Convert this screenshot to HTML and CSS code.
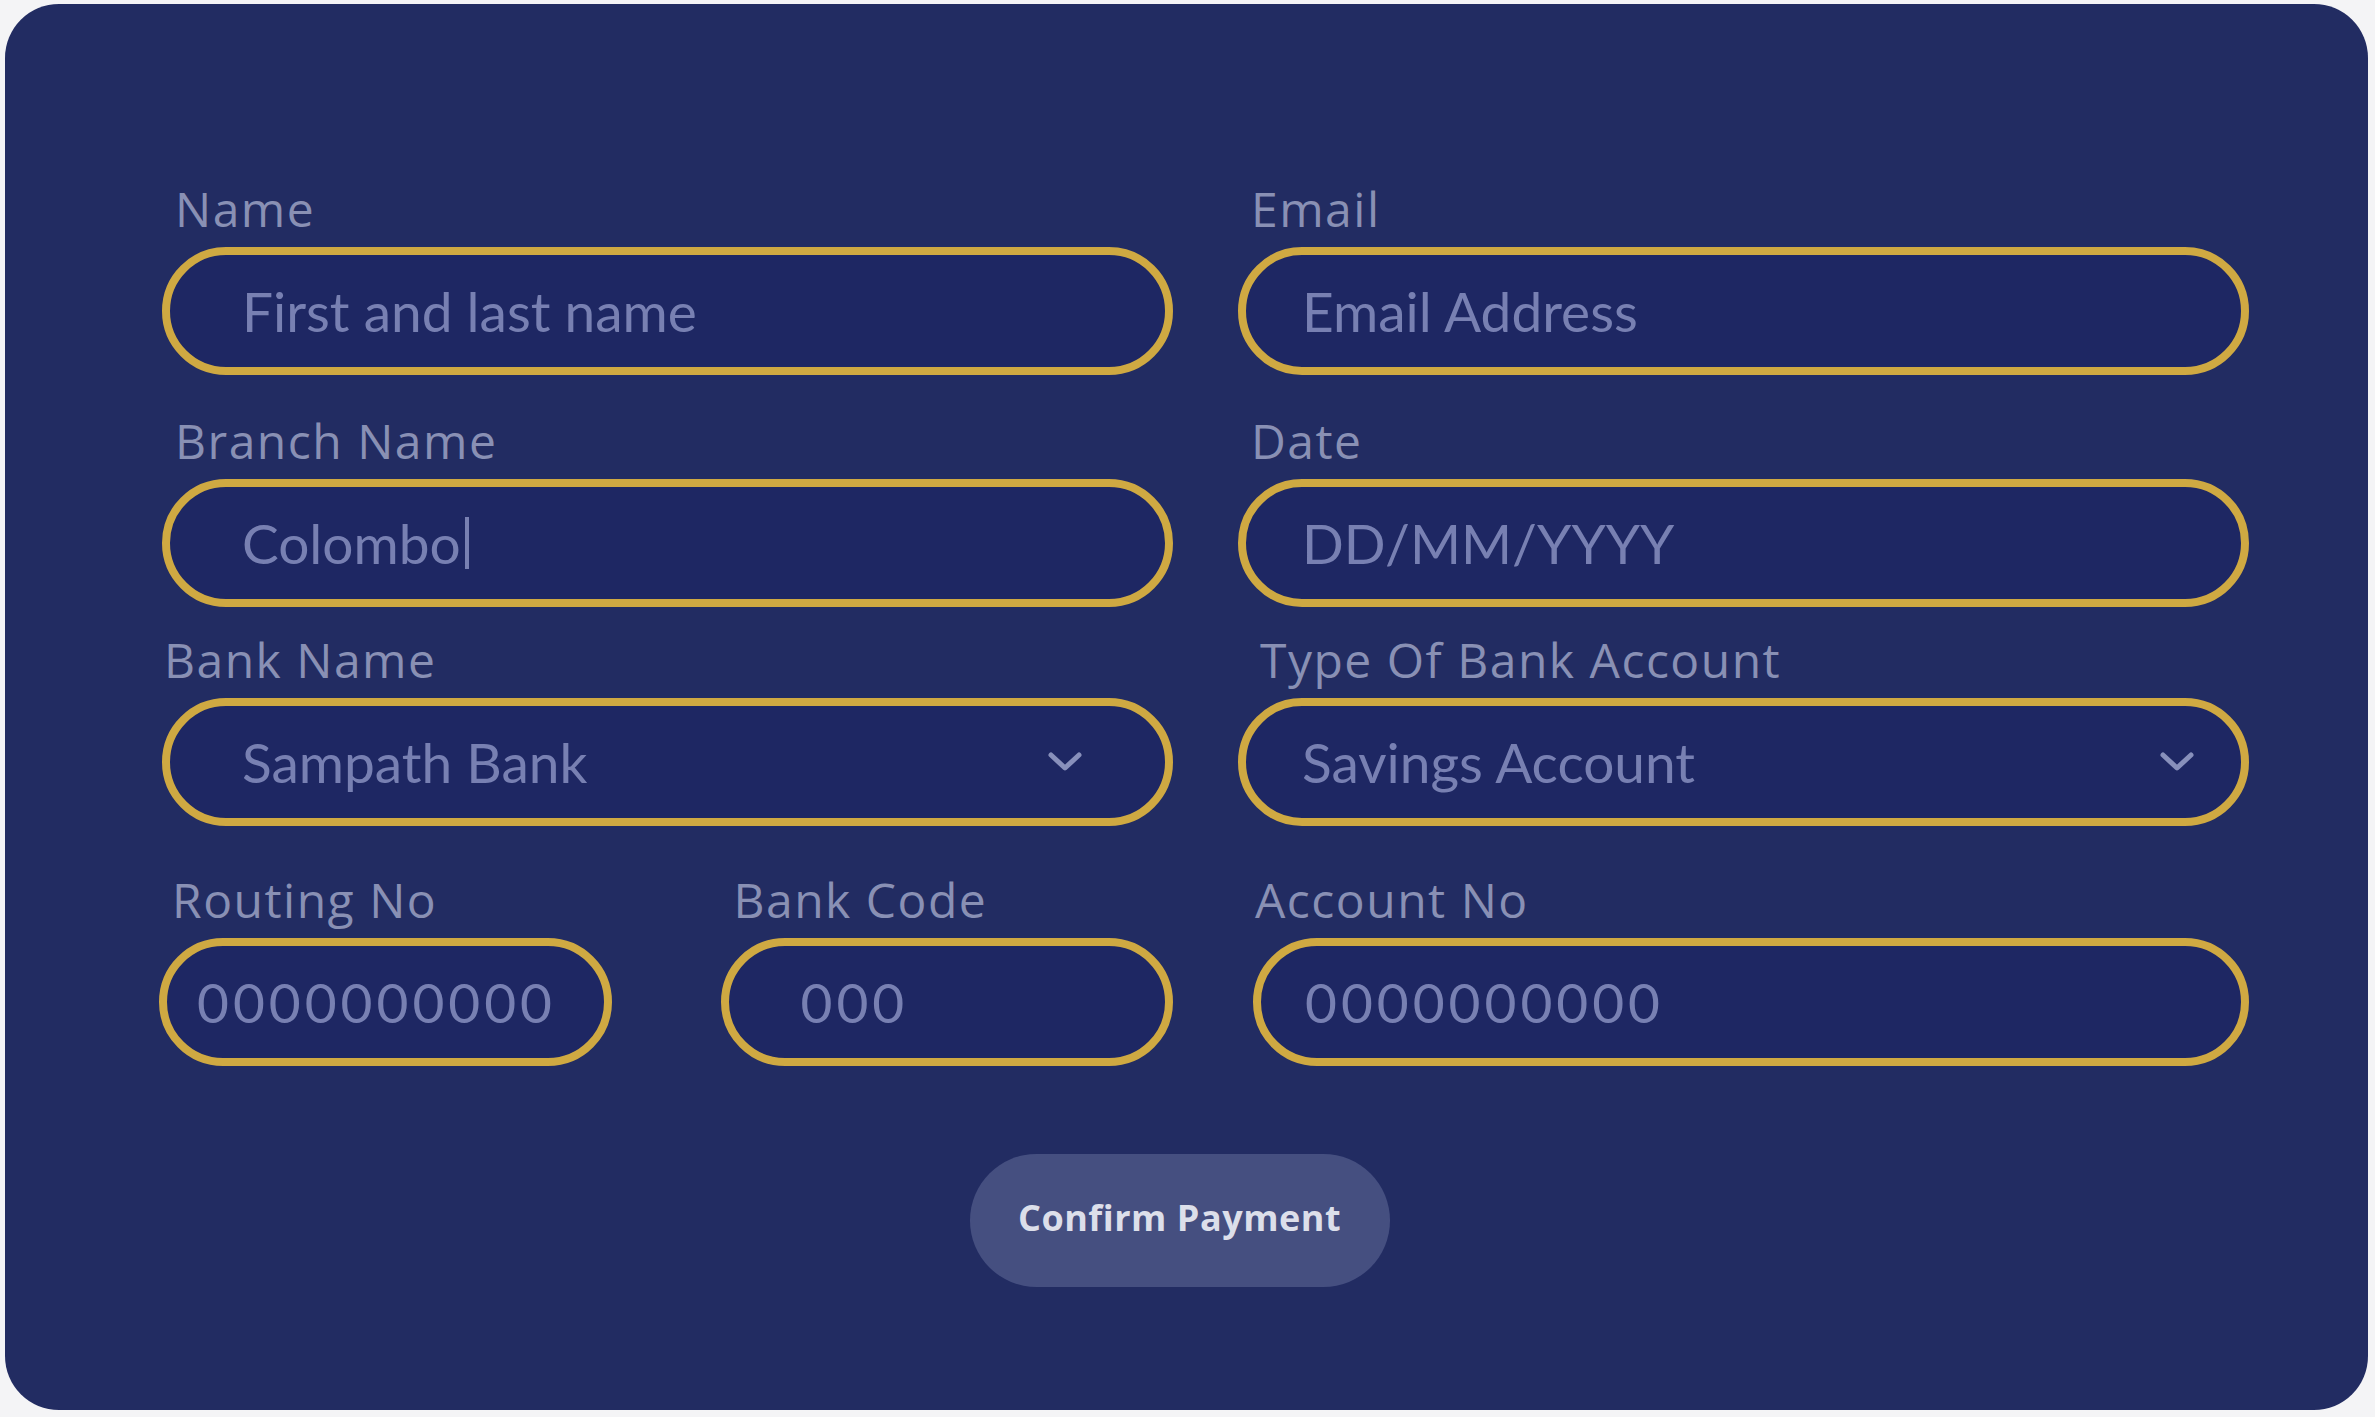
FILE: index.html
```html
<!DOCTYPE html>
<html lang="en">
<head>
<meta charset="utf-8">
<title>Payment Details</title>
<link rel="stylesheet" href="styles.css">
</head>
<body>
<main class="card">
  <form class="form">
    <div class="grid">
      <div class="field">
        <label class="label">Name</label>
        <div class="input input-left"><span class="ph">First and last name</span></div>
      </div>
      <div class="field">
        <label class="label">Email</label>
        <div class="input"><span class="ph">Email Address</span></div>
      </div>
      <div class="field">
        <label class="label">Branch Name</label>
        <div class="input input-left"><span class="ph">Colombo</span><span class="caret"></span></div>
      </div>
      <div class="field">
        <label class="label">Date</label>
        <div class="input"><span class="ph">DD/MM/YYYY</span></div>
      </div>
      <div class="field row3">
        <label class="label label-flush">Bank Name</label>
        <div class="input input-left select select-bank"><span class="ph">Sampath Bank</span>
          <svg class="chev" viewBox="0 0 36 22" width="36" height="22"><path d="M4 4 L18 17 L32 4" fill="none" stroke="currentColor" stroke-width="5" stroke-linecap="round" stroke-linejoin="round"/></svg>
        </div>
      </div>
      <div class="field row3">
        <label class="label label-wide">Type Of Bank Account</label>
        <div class="input select"><span class="ph">Savings Account</span>
          <svg class="chev" viewBox="0 0 36 22" width="36" height="22"><path d="M4 4 L18 17 L32 4" fill="none" stroke="currentColor" stroke-width="5" stroke-linecap="round" stroke-linejoin="round"/></svg>
        </div>
      </div>
      <div class="split row4">
        <div class="field">
          <label class="label">Routing No</label>
          <div class="input input-tight"><span class="ph digits">0000000000</span></div>
        </div>
        <div class="field">
          <label class="label">Bank Code</label>
          <div class="input input-left"><span class="ph digits">000</span></div>
        </div>
      </div>
      <div class="field field-inset row4">
        <label class="label label-small">Account No</label>
        <div class="input input-mid"><span class="ph digits">0000000000</span></div>
      </div>
    </div>
    <div class="actions">
      <button type="button" class="btn">Confirm Payment</button>
    </div>
  </form>
</main>
</body>
</html>
```

FILE: styles.css
```css
* { box-sizing: border-box; }

html, body {
  margin: 0;
  padding: 0;
  background: #f4f4f6;
}

body {
  font-family: "Lato", "Open Sans", "Liberation Sans", sans-serif;
  width: 2375px;
  height: 1417px;
  overflow: hidden;
}

.card {
  margin: 4px 7px 7px 5px;
  height: 1406px;
  background: #222c62;
  border-radius: 54px;
  padding: 177px 119px 0 157px;
}

.form {
  display: flex;
  flex-direction: column;
}

.grid {
  display: grid;
  grid-template-columns: 1fr 1fr;
  column-gap: 65px;
  row-gap: 38px;
}

.row3 { margin-top: -13px; }
.row4 { margin-top: 8px; }

.field {
  display: flex;
  flex-direction: column;
  gap: 10px;
}

.field-inset {
  padding-left: 15px;
}

.label {
  height: 56px;
  line-height: 56px;
  font-family: "Open Sans", "Liberation Sans", sans-serif;
  font-size: 48px;
  letter-spacing: 1.5px;
  color: #8990b4;
  padding-left: 13px;
  white-space: nowrap;
}

.label-flush { padding-left: 2px; }
.label-wide { padding-left: 22px; }
.label-small { padding-left: 2px; }

.input {
  height: 128px;
  border: 8px solid #cfa942;
  border-radius: 64px;
  background: #1e2763;
  display: flex;
  align-items: center;
  padding: 0 46px 0 56px;
}

.input-left { padding-left: 72px; }
.input-tight { padding-left: 30px; padding-right: 20px; }
.input-mid { padding-left: 44px; }

.select { justify-content: space-between; }
.select-bank { padding-right: 82px; }

.ph {
  font-size: 55px;
  color: #7880b2;
  white-space: nowrap;
}

.digits {
  letter-spacing: 4px;
}

.caret {
  display: inline-block;
  width: 4px;
  height: 52px;
  background: #7880b2;
  margin-left: 4px;
}

.chev {
  color: #8890bb;
  flex: none;
}

.split {
  display: grid;
  grid-template-columns: 1fr 1fr;
  column-gap: 109px;
  margin-left: -3px;
}

.actions {
  display: flex;
  justify-content: center;
  padding-right: 52px;
  margin-top: 88px;
}

.btn {
  width: 420px;
  height: 133px;
  border: none;
  border-radius: 67px;
  background: #454f80;
  color: #dcdfea;
  font-family: "Open Sans", "Liberation Sans", sans-serif;
  font-weight: 700;
  font-size: 36px;
  letter-spacing: 0.5px;
  padding: 0 0 6px 0;
}
```
